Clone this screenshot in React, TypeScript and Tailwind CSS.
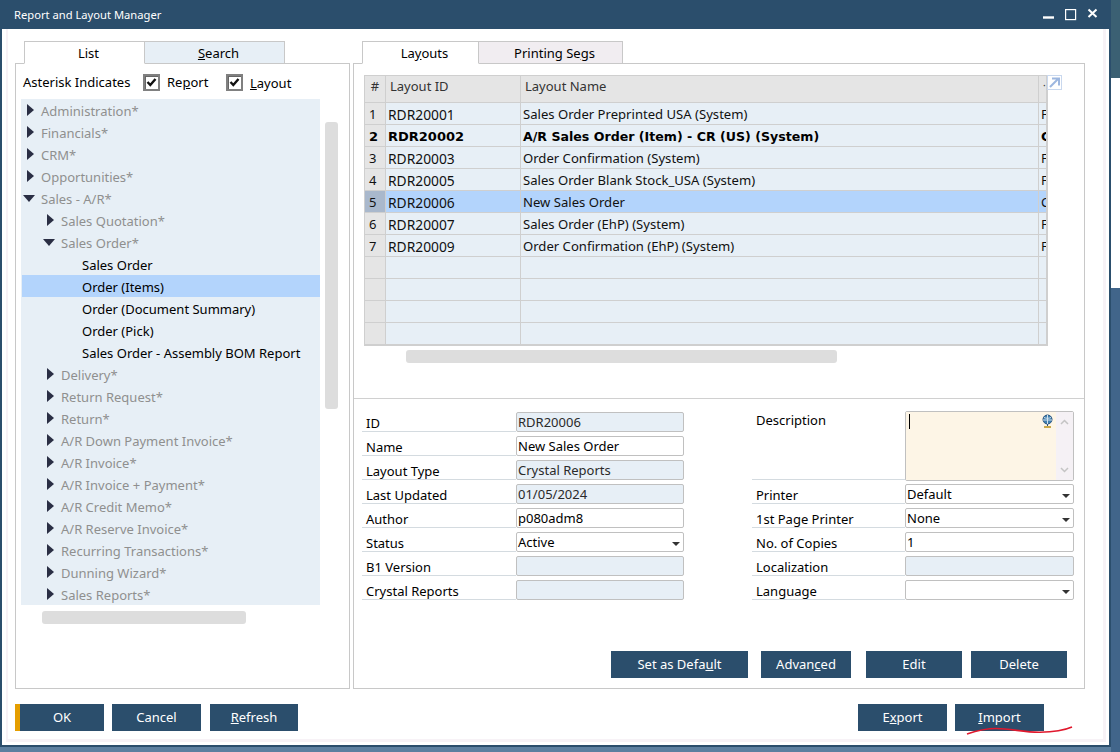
import type { ReactNode } from "react";

const FONT = "font-['Noto_Sans','Liberation_Sans',sans-serif]";

type TreeRow = {
  label: string;
  level: 0 | 1 | 2;
  open?: boolean;
  selected?: boolean;
};

const treeRows: TreeRow[] = [
  { label: "Administration*", level: 0 },
  { label: "Financials*", level: 0 },
  { label: "CRM*", level: 0 },
  { label: "Opportunities*", level: 0 },
  { label: "Sales - A/R*", level: 0, open: true },
  { label: "Sales Quotation*", level: 1 },
  { label: "Sales Order*", level: 1, open: true },
  { label: "Sales Order", level: 2 },
  { label: "Order (Items)", level: 2, selected: true },
  { label: "Order (Document Summary)", level: 2 },
  { label: "Order (Pick)", level: 2 },
  { label: "Sales Order - Assembly BOM Report", level: 2 },
  { label: "Delivery*", level: 1 },
  { label: "Return Request*", level: 1 },
  { label: "Return*", level: 1 },
  { label: "A/R Down Payment Invoice*", level: 1 },
  { label: "A/R Invoice*", level: 1 },
  { label: "A/R Invoice + Payment*", level: 1 },
  { label: "A/R Credit Memo*", level: 1 },
  { label: "A/R Reserve Invoice*", level: 1 },
  { label: "Recurring Transactions*", level: 1 },
  { label: "Dunning Wizard*", level: 1 },
  { label: "Sales Reports*", level: 1 },
];

const gridRows = [
  { id: "RDR20001", name: "Sales Order Preprinted USA (System)", last: "F" },
  { id: "RDR20002", name: "A/R Sales Order (Item) - CR (US) (System)", last: "C", bold: true },
  { id: "RDR20003", name: "Order Confirmation (System)", last: "F" },
  { id: "RDR20005", name: "Sales Order Blank Stock_USA (System)", last: "F" },
  { id: "RDR20006", name: "New Sales Order", last: "C", selected: true },
  { id: "RDR20007", name: "Sales Order (EhP) (System)", last: "F" },
  { id: "RDR20009", name: "Order Confirmation (EhP) (System)", last: "F" },
  { id: "", name: "", last: "" },
  { id: "", name: "", last: "" },
  { id: "", name: "", last: "" },
  { id: "", name: "", last: "" },
];

const Arrow = ({ open }: { open?: boolean }) =>
  open ? (
    <svg width="12" height="7" viewBox="0 0 12 7" className="shrink-0 -mr-px">
      <path d="M0 0h12L6 7z" fill="#2a2e44" />
    </svg>
  ) : (
    <svg width="7" height="12" viewBox="0 0 7 12" className="shrink-0">
      <path d="M0 0l7 6-7 6z" fill="#2a2e44" />
    </svg>
  );

const Tree = () => (
  <div className="w-[299px] h-[506px] bg-[#e7eff6] overflow-hidden">
    {treeRows.map((row) => (
      <div
        key={row.label}
        className={`h-[22px] flex items-center ${row.selected ? "bg-[#b3d4fc] ml-px" : ""}`}
      >
        {row.level === 2 ? (
          <span className={`text-black pt-[3px] ${row.selected ? "pl-[60px]" : "pl-[61px]"}`}>{row.label}</span>
        ) : (
          <>
            <span
              className={`flex justify-end shrink-0 ${row.level === 0 ? "w-[13px]" : "w-[33px]"}`}
            >
              <Arrow open={row.open} />
            </span>
            <span className="pl-[7px] pt-[3px] text-[#8f8f8f]">{row.label}</span>
          </>
        )}
      </div>
    ))}
  </div>
);

const Check = () => (
  <span className="w-[17px] h-[17px] border-2 border-[#808080] bg-white shadow-[inset_1px_1px_0_#666] flex items-center justify-center shrink-0">
    <svg width="11" height="11" viewBox="0 0 11 11">
      <path d="M1.5 5l2.8 3L9.5 2" fill="none" stroke="#111" strokeWidth="2.4" />
    </svg>
  </span>
);

const Tab = ({
  active,
  children,
  className,
}: {
  active?: boolean;
  children: ReactNode;
  className: string;
}) => (
  <div
    className={`h-[23px] border border-[#c8c8c8] flex items-center justify-center pl-2 pt-[2px] ${
      active ? "bg-white border-b-white z-10 relative" : ""
    } ${className}`}
  >
    {children}
  </div>
);

const Btn = ({
  children,
  className,
  accent,
}: {
  children: ReactNode;
  className: string;
  accent?: boolean;
}) => (
  <button
    className={`h-[27px] bg-[#2b4e6c] text-white flex items-center justify-center ${
      accent ? "border-l-[5px] border-[#e59e00]" : ""
    } ${className}`}
  >
    <span>{children}</span>
  </button>
);

const Caret = () => (
  <svg width="8" height="4" viewBox="0 0 8 4" className="absolute right-[3px] top-[9px]">
    <path d="M0 0h8L4 4z" fill="#333" />
  </svg>
);

const Field = ({
  label,
  value,
  kind = "input",
  labelW,
  inputW,
}: {
  label: string;
  value?: string;
  kind?: "input" | "locked" | "select";
  labelW: string;
  inputW: string;
}) => (
  <div className="h-[24px] flex items-stretch">
    <div className={`${labelW} border-b border-[#d4dbe0] mb-[3px] pl-1 flex items-center pt-[5px] shrink-0`}>
      {label}
    </div>
    <div
      className={`relative ${inputW} h-[20px] mt-px rounded-[2px] border border-[#c0c0c0] pl-px leading-[19px] whitespace-nowrap ${
        kind === "locked" ? "bg-[#e7eff6] text-[#2a2a2a]" : "bg-white"
      }`}
    >
      {value}
      {kind === "select" && <Caret />}
    </div>
  </div>
);

const LayoutGrid = () => (
  <div className="relative w-[684px] border border-[#cfcfcf] border-r-2 text-[#111]">
    <div className="h-[27px] flex bg-[#e5e5e5] border-b border-[#cfcfcf] text-[#333]">
      <div className="w-[21px] border-r border-[#cfcfcf] text-center leading-[20px]">#</div>
      <div className="w-[135px] border-r border-[#cfcfcf] pl-1 leading-[20px]">Layout ID</div>
      <div className="w-[518px] border-r border-[#cfcfcf] pl-1 leading-[20px]">Layout Name</div>
      <div className="flex-1 pl-1 leading-[18px] text-[10px]">·</div>
    </div>
    {gridRows.map((row, i) => (
      <div
        key={i}
        className={`h-[22px] flex border-b border-[#cfcfcf] last:border-b-0 leading-[23px] ${
          row.bold ? "font-bold font-['DejaVu_Sans',sans-serif] text-black" : ""
        } ${row.selected ? "bg-[#b3d4fc]" : "bg-[#e7eff6]"}`}
      >
        <div
          className={`w-[21px] border-r border-[#cfcfcf] pl-1 ${
            row.selected ? "bg-[#a9b8cc]" : "bg-[#e5e5e5]"
          }`}
        >
          {row.id ? i + 1 : ""}
        </div>
        <div className={`w-[135px] border-r border-[#cfcfcf] pl-[2px] ${row.bold ? "" : "text-[13.8px]"}`}>{row.id}</div>
        <div
          className={`w-[518px] border-r border-[#cfcfcf] pl-[2px] whitespace-nowrap ${
            row.bold ? "text-[12.6px]" : "text-[13.1px]"
          }`}
        >
          {row.name}
        </div>
        <div className="flex-1 pl-[2px] overflow-hidden">{row.last}</div>
      </div>
    ))}
    <div className="absolute left-[682px] -top-px w-[15px] h-[15px] border border-[#c9d8ee] bg-white flex items-center justify-center">
      <svg width="11" height="11" viewBox="0 0 11 11">
        <path d="M1 10L9 2M3 1.5h7v7" fill="none" stroke="#9db7e0" strokeWidth="2" />
      </svg>
    </div>
  </div>
);

export default function App() {
  return (
    <div className={`w-[1120px] h-[752px] overflow-hidden flex bg-[#5d7f9f] text-[13px] leading-none text-black ${FONT}`}>
      <div className="w-[1111px] h-[747px] shrink-0 relative flex flex-col bg-white border-l-2 border-r-2 border-b-2 border-[#2b4e6c]">
        {/* title bar */}
        <div className="h-[29px] -mx-[2px] shrink-0 bg-[#2b4e6c] text-white text-[11.2px] flex items-center pl-[14px] pr-[8px]">
          <span className="flex-1 pt-px">Report and Layout Manager</span>
          <svg width="60" height="14" viewBox="0 0 60 14" fill="none" stroke="#fff" className="-mt-px">
            <path d="M0 10.5h11" strokeWidth="2.4" />
            <rect x="22.6" y="2.6" width="10" height="10" strokeWidth="1.2" />
            <path d="M45.5 2.5l8 7.5M53.5 2.5l-8 7.5" strokeWidth="2" />
          </svg>
        </div>

        <div className="flex-1 ml-[4px] mr-[3px] mb-[3px] bg-white border-l-2 border-r-[3px] border-b-[3px] border-[#f7f2f6] flex flex-col pl-[7px] pt-[12px]">
          <div className="flex gap-[3px] h-[648px]">
            {/* left panel */}
            <div className="w-[335px] flex flex-col">
              <div className="flex pl-[9px] h-[23px] shrink-0 -mb-px">
                <Tab active className="w-[121px]">List</Tab>
                <Tab className="w-[141px] -ml-px bg-[#e7eff6]">
                  <span><u>S</u>earch</span>
                </Tab>
              </div>
              <div className="flex-1 border border-[#c8c8c8] pl-[5px]">
                <div className="h-[35px] flex items-center pl-[2px] pt-[2px]">
                  <span className="w-[120px]">Asterisk Indicates</span>
                  <Check />
                  <span className="ml-[7px] w-[59px]">Re<u>p</u>ort</span>
                  <Check />
                  <span className="ml-[7px] pt-px"><u>L</u>ayout</span>
                </div>
                <div className="flex gap-[5px]">
                  <Tree />
                  <div className="mt-[23px] w-[13px] h-[287px] rounded-[3px] bg-[#dddddd]" />
                </div>
                <div className="ml-[21px] mt-[6px] w-[204px] h-[13px] rounded-[3px] bg-[#dddddd]" />
              </div>
            </div>

            {/* right panel */}
            <div className="w-[732px] flex flex-col">
              <div className="flex pl-[9px] h-[23px] shrink-0 -mb-px">
                <Tab active className="w-[117px]">
                  <span>La<u>y</u>outs</span>
                </Tab>
                <Tab className="w-[145px] -ml-px bg-[#f1edf1]">
                  <span>Printing Se<u>g</u>s</span>
                </Tab>
              </div>
              <div className="flex-1 border border-[#c8c8c8] flex flex-col">
                <div className="h-[335px] shrink-0 border-b border-[#d0d0d0] pl-[10px] pt-[11px]">
                  <LayoutGrid />
                  <div className="ml-[42px] mt-[4px] w-[431px] h-[13px] rounded-[3px] bg-[#dddddd]" />
                </div>
                <div className="flex pl-[8px] pt-[12px]">
                  <div className="w-[390px]">
                    <Field labelW="w-[154px]" inputW="w-[168px]" label="ID" value="RDR20006" kind="locked" />
                    <Field labelW="w-[154px]" inputW="w-[168px]" label="Name" value="New Sales Order" />
                    <Field labelW="w-[154px]" inputW="w-[168px]" label="Layout Type" value="Crystal Reports" kind="locked" />
                    <Field labelW="w-[154px]" inputW="w-[168px]" label="Last Updated" value="01/05/2024" kind="locked" />
                    <Field labelW="w-[154px]" inputW="w-[168px]" label="Author" value="p080adm8" />
                    <Field labelW="w-[154px]" inputW="w-[168px]" label="Status" value="Active" kind="select" />
                    <Field labelW="w-[154px]" inputW="w-[168px]" label="B1 Version" kind="locked" />
                    <Field labelW="w-[154px]" inputW="w-[168px]" label="Crystal Reports" kind="locked" />
                  </div>
                  <div className="w-[322px]">
                    <div className="h-[72px] flex">
                      <div className="w-[153px] border-b border-[#d4dbe0] mb-[3px] pl-1 leading-[18px] shrink-0">
                        Description
                      </div>
                      <div className="relative w-[169px] h-[70px] rounded-[2px] border border-[#c0c0c0] flex">
                        <div className="flex-1 bg-[#fdf5e6] relative">
                          <div className="absolute left-[3px] top-[2px] w-px h-[15px] bg-black" />
                          <svg width="13" height="14" viewBox="0 0 13 14" className="absolute right-[2px] top-[2px]">
                            <circle cx="6.5" cy="5.5" r="4.5" fill="#3f7fb0" stroke="#27527e" />
                            <path d="M3 3.5c2 1 5 1 7 0M6.5 1v9M2 6h9" stroke="#cfe0ec" fill="none" />
                            <path d="M6.5 10v2" stroke="#27527e" />
                            <path d="M3 13h7" stroke="#c9a84a" strokeWidth="2" />
                          </svg>
                        </div>
                        <div className="w-[17px] bg-[#f5f1f5] flex flex-col justify-between items-center py-[7px]">
                          <svg width="9" height="6" viewBox="0 0 9 6">
                            <path d="M1 5l3.5-3.5L8 5" fill="none" stroke="#c4c4c4" strokeWidth="1.5" />
                          </svg>
                          <svg width="9" height="6" viewBox="0 0 9 6">
                            <path d="M1 1l3.5 3.5L8 1" fill="none" stroke="#c4c4c4" strokeWidth="1.5" />
                          </svg>
                        </div>
                      </div>
                    </div>
                    <Field labelW="w-[153px]" inputW="w-[169px]" label="Printer" value="Default" kind="select" />
                    <Field labelW="w-[153px]" inputW="w-[169px]" label="1st Page Printer" value="None" kind="select" />
                    <Field labelW="w-[153px]" inputW="w-[169px]" label="No. of Copies" value="1" />
                    <Field labelW="w-[153px]" inputW="w-[169px]" label="Localization" kind="locked" />
                    <Field labelW="w-[153px]" inputW="w-[169px]" label="Language" kind="select" />
                  </div>
                </div>
                <div className="mt-auto mb-[10px] flex pl-[257px]">
                  <Btn className="w-[137px]">Set as Defa<u>u</u>lt</Btn>
                  <Btn className="w-[90px] ml-[13px]">Advan<u>c</u>ed</Btn>
                  <Btn className="w-[96px] ml-[15px]">Edit</Btn>
                  <Btn className="w-[96px] ml-[9px]">Delete</Btn>
                </div>
              </div>
            </div>
          </div>

          {/* bottom buttons */}
          <div className="mt-[15px] flex">
            <Btn accent className="w-[89px]">OK</Btn>
            <Btn className="w-[89px] ml-[8px]">Cancel</Btn>
            <Btn className="w-[88px] ml-[9px]"><u>R</u>efresh</Btn>
            <Btn className="w-[89px] ml-[560px]">E<u>x</u>port</Btn>
            <Btn className="w-[89px] ml-[8px]"><u>I</u>mport</Btn>
          </div>
        </div>

        {/* red pen mark over the window */}
        <svg width="110" height="12" viewBox="0 0 110 12" className="absolute left-[964px] top-[724px]" fill="none">
          <path
            d="M1 10C10 7 18 4.5 30 4.5C45 4.5 58 8.5 74 8.3C88 8 99 6 106 3"
            stroke="#e0182d"
            strokeWidth="1.6"
          />
        </svg>
      </div>

      {/* desktop behind the window */}
      <div className="flex-1 flex flex-col">
        <div className="h-[78px] bg-[#3b6073]" />
        <div className="h-[210px] bg-white" />
        <div className="flex-1 bg-[#41658a]" />
      </div>
    </div>
  );
}
